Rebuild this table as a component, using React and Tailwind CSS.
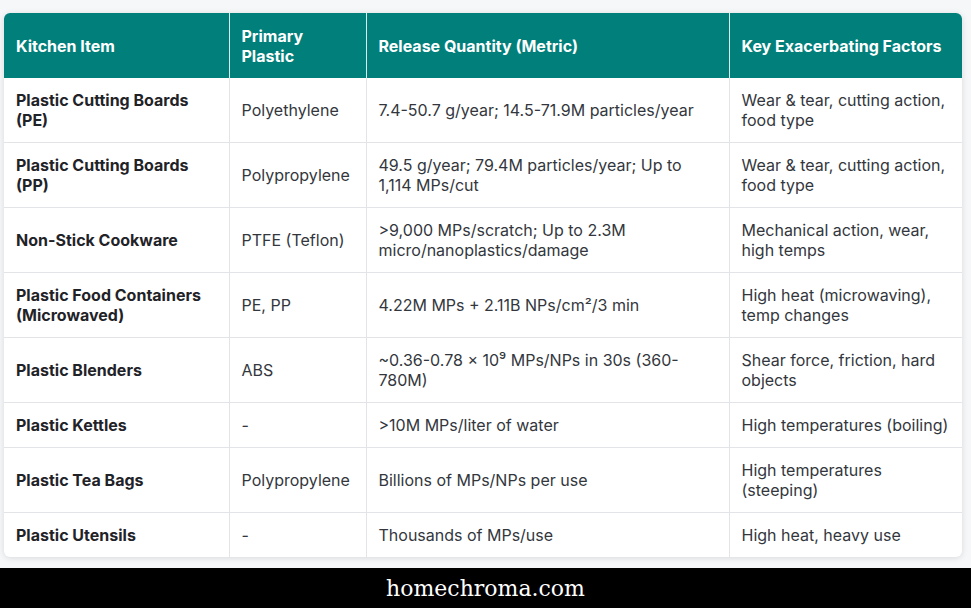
export default function App() {
  const rows = [
    ["Plastic Cutting Boards (PE)", "Polyethylene", "7.4-50.7 g/year; 14.5-71.9M particles/year", "Wear & tear, cutting action, food type"],
    ["Plastic Cutting Boards (PP)", "Polypropylene", "49.5 g/year; 79.4M particles/year; Up to 1,114 MPs/cut", "Wear & tear, cutting action, food type"],
    ["Non-Stick Cookware", "PTFE (Teflon)", ">9,000 MPs/scratch; Up to 2.3M micro/nanoplastics/damage", "Mechanical action, wear, high temps"],
    ["Plastic Food Containers (Microwaved)", "PE, PP", "4.22M MPs + 2.11B NPs/cm²/3 min", "High heat (microwaving), temp changes"],
    ["Plastic Blenders", "ABS", "~0.36-0.78 × 10⁹ MPs/NPs in 30s (360-780M)", "Shear force, friction, hard objects"],
    ["Plastic Kettles", "-", ">10M MPs/liter of water", "High temperatures (boiling)"],
    ["Plastic Tea Bags", "Polypropylene", "Billions of MPs/NPs per use", "High temperatures (steeping)"],
    ["Plastic Utensils", "-", "Thousands of MPs/use", "High heat, heavy use"],
  ];
  const heads = ["Kitchen Item", "Primary Plastic", "Release Quantity (Metric)", "Key Exacerbating Factors"];
  const widths = ["w-[225px]", "w-[137px]", "w-[363px]", "w-[233px]"];
  return (
    <div className="w-[971px] h-[608px] bg-[#f6f7f8] flex flex-col" style={{ fontFamily: "Inter, 'Noto Sans', sans-serif" }}>
      <div className="h-[568px] pt-[13px] pl-[4px]">
        <div className="w-[958px] rounded-[6px] overflow-hidden bg-white shadow-[0_1px_6px_rgba(0,0,0,0.12)]">
          <table className="w-[958px] table-fixed border-collapse text-[16px] leading-[20px]">
            <colgroup>
              {widths.map((w, i) => <col key={i} className={w} />)}
            </colgroup>
            <thead>
              <tr className="bg-[#007f7b] text-white h-[65px]">
                {heads.map((h, i) => (
                  <th key={i} className={`text-left font-bold px-3 py-3 align-middle ${i > 0 ? "border-l border-[#d9eceb]" : ""}`}>
                    {h}
                  </th>
                ))}
              </tr>
            </thead>
            <tbody>
              {rows.map((r, ri) => (
                <tr key={ri} className="border-t border-[#e2e4e7] first:border-t-0">
                  {r.map((c, ci) => (
                    <td
                      key={ci}
                      className={`px-3 py-3 align-middle ${ci > 0 ? "border-l border-[#e2e4e7]" : ""} ${ci === 0 ? "font-bold text-[#1f2328]" : "text-[#33373d]"}`}
                    >
                      {c}
                    </td>
                  ))}
                </tr>
              ))}
            </tbody>
          </table>
        </div>
      </div>
      <div className="h-[40px] bg-black flex items-center justify-center">
        <span className="text-white text-[22px]" style={{ fontFamily: "'DejaVu Serif', serif" }}>homechroma.com</span>
      </div>
    </div>
  );
}
